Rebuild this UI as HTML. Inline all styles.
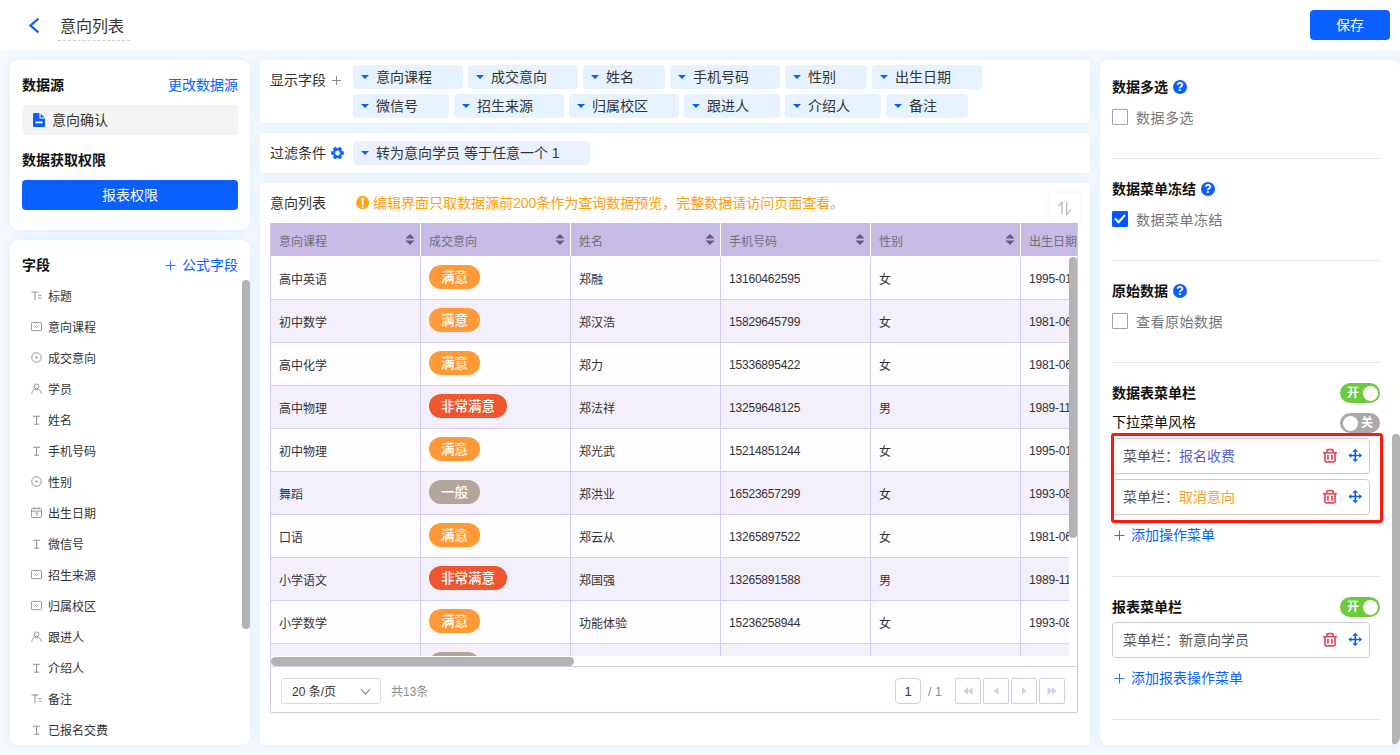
<!DOCTYPE html>
<html lang="zh-CN">
<head>
<meta charset="utf-8">
<title>意向列表</title>
<style>
*{box-sizing:border-box;margin:0;padding:0}
html,body{width:1400px;height:755px;overflow:hidden}
body{background:#f6faff;font-family:"Liberation Sans","Noto Sans CJK SC",sans-serif;font-size:14px;color:#333;position:relative}
.abs{position:absolute}
.hdr{position:absolute;left:0;top:0;width:1400px;height:50px;background:#fff}
.panel{position:absolute;background:#fff;border-radius:8px;box-shadow:0 0 10px rgba(70,160,250,.17)}
.b{font-weight:bold;color:#111}
.blue{color:#0a62ff}
.btn{background:#0960ff;color:#fff;border-radius:4px;text-align:center}
.t{position:absolute;white-space:nowrap;line-height:20px}
/* field list */
.fl{position:absolute;left:20px;height:20px;line-height:20px;font-size:12px;color:#333;white-space:nowrap}
.fl svg{position:absolute;left:1px;top:4px;width:11px;height:11px}
.fl span{position:absolute;left:18px;top:1px}
/* chips */
.chip{position:absolute;height:24px;border-radius:4px;background:#e6f3ff;font-size:14px;line-height:24px;color:#333;white-space:nowrap}
.chip i{position:absolute;left:8px;top:10px;width:0;height:0;border-left:4px solid transparent;border-right:4px solid transparent;border-top:4.5px solid #0960ff}
.chip span{position:absolute;left:23px;top:0}
/* table */
.th{position:absolute;top:0;height:33px;background:#c7bbe6;color:#6f6f7a;font-size:12px;line-height:39px;padding-left:8px;white-space:nowrap;overflow:hidden}
.row{position:absolute;left:0;width:799px;height:43px;border-bottom:1px solid #d6ccef}
.row.e{background:#f3f0fb}
.row.o{background:#fdfcff}
.td.n{line-height:44px;letter-spacing:-.2px}
.td{position:absolute;top:0;height:42px;line-height:46px;font-size:12px;color:#333;padding-left:8px;border-left:1px solid #d6ccef;white-space:nowrap;overflow:hidden}
.tag{position:absolute;left:8px;top:8px;height:24px;line-height:25px;border-radius:12px;color:#fff;font-size:13.5px;font-weight:500;padding:0 12px}
.tag.a{background:#ff9a36}.tag.r{background:#ef552e}.tag.g{background:#b3a599}
.sort{position:absolute;right:5px;top:11px;width:10px;height:11px}
/* right panel */
.sep{position:absolute;left:12px;width:268px;height:1px;background:#e6e6e6}
.cb{position:absolute;left:12px;width:16px;height:16px;border:1px solid #9d9dbd;border-radius:1px;background:#fff}
.cbl{position:absolute;left:36px;font-size:14px;color:#777;line-height:20px;white-space:nowrap;letter-spacing:.5px}
.q{position:absolute;width:14px;height:14px;border-radius:50%;background:#0960ff;color:#fff;font-size:12px;font-weight:bold;line-height:14.5px;text-align:center}
.sw{position:absolute;left:240px;width:40px;height:20px;border-radius:10px;color:#fff;font-size:12px;font-weight:bold;line-height:20px}
.sw b{position:absolute;top:2.5px;width:15px;height:15px;border-radius:50%;background:#fff}
.mi{position:absolute;left:12px;width:258px;height:36px;border:1px solid #ccc;border-radius:4px;background:#fff;font-size:14px;line-height:34px;color:#555;padding-left:10px;white-space:nowrap}
</style>
</head>
<body>
<!-- HEADER -->
<div class="hdr">
  <svg class="abs" style="left:28px;top:17px" width="13" height="17" viewBox="0 0 13 17"><path d="M10.5 1.5 L2.5 8.5 L10.5 15.5" fill="none" stroke="#0960ff" stroke-width="2.3" stroke-linecap="butt" stroke-linejoin="miter"/></svg>
  <div class="t" style="left:60px;top:16px;font-size:16px;color:#333;line-height:22px">意向列表</div>
  <div class="abs" style="left:58px;top:40px;width:72px;height:0;border-top:1px dashed #d0d0d0"></div>
  <div class="btn abs" style="left:1310px;top:10px;width:80px;height:30px;line-height:30px;font-size:14px">保存</div>
</div>
<!-- LEFT-1 -->
<div class="panel" id="L1" style="left:10px;top:60px;width:240px;height:170px">
  <div class="t b" style="left:12px;top:15px">数据源</div>
  <div class="t blue" style="right:12px;top:15px">更改数据源</div>
  <div class="abs" style="left:12px;top:45px;width:216px;height:30px;background:#f4f4f4;border-radius:3px"></div>
  <svg class="abs" style="left:23px;top:53px" width="12" height="14" viewBox="0 0 12 14"><path d="M0 1.2 Q0 0 1.2 0 H7 L12 5 V12.8 Q12 14 10.8 14 H1.2 Q0 14 0 12.8 Z" fill="#0960ff"/><path d="M7 0 V5 H12" fill="none" stroke="#fff" stroke-width="1.2"/><rect x="2.5" y="8.5" width="7" height="1.8" fill="#fff"/></svg>
  <div class="t" style="left:42px;top:50px;color:#333">意向确认</div>
  <div class="t b" style="left:12px;top:90px">数据获取权限</div>
  <div class="btn abs" style="left:12px;top:120px;width:216px;height:30px;line-height:30px;font-size:14px">报表权限</div>
</div>
<!-- LEFT-2 -->
<div class="panel" id="L2" style="left:10px;top:240px;width:240px;height:505px;overflow:hidden">
  <div class="t b" style="left:12px;top:15px">字段</div>
  <div class="t blue" style="right:12px;top:15px"><svg style="position:absolute;left:0;top:5px" width="11" height="11" viewBox="0 0 11 11"><path d="M5.5 0.5V10.5M0.5 5.5H10.5" stroke="#2d72ff" stroke-width="1" fill="none"/></svg><span style="padding-left:17px">公式字段</span></div>
  <div class="abs" style="left:232px;top:40px;width:8px;height:349px;border-radius:4px;background:#b3b3b3"></div>
  <div class="fl" style="top:46px"><svg viewBox="0 0 11 11"><path d="M0.5 2H7.3M4 2V10.2M7.6 5.5H10.2M7.6 8H10.2" fill="none" stroke="#8c8c8c" stroke-width="1"/></svg><span>标题</span></div>
<div class="fl" style="top:77px"><svg viewBox="0 0 12 12"><rect x="0.5" y="1.5" width="11" height="9" rx="1" fill="none" stroke="#8c8c8c" stroke-width="1"/><path d="M3.8 5L6 7.2L8.2 5" fill="none" stroke="#8c8c8c" stroke-width="1"/></svg><span>意向课程</span></div>
<div class="fl" style="top:108px"><svg viewBox="0 0 12 12"><circle cx="6" cy="6" r="5.2" fill="none" stroke="#8c8c8c" stroke-width="1"/><circle cx="6" cy="6" r="1.2" fill="#8c8c8c"/></svg><span>成交意向</span></div>
<div class="fl" style="top:139px"><svg viewBox="0 0 12 12"><circle cx="6" cy="3.7" r="2.7" fill="none" stroke="#8c8c8c" stroke-width="1"/><path d="M0.8 11.5C1.2 8.3 3.4 6.6 6 6.6S10.8 8.3 11.2 11.5" fill="none" stroke="#8c8c8c" stroke-width="1"/></svg><span>学员</span></div>
<div class="fl" style="top:170px"><svg viewBox="0 0 11 11"><path d="M2 2.3H9.2" fill="none" stroke="#a8a8a8" stroke-width="1.3"/><path d="M5.6 2.3V10.2M3.1 10.2H8.1" fill="none" stroke="#8c8c8c" stroke-width="1"/></svg><span>姓名</span></div>
<div class="fl" style="top:201px"><svg viewBox="0 0 11 11"><path d="M2 2.3H9.2" fill="none" stroke="#a8a8a8" stroke-width="1.3"/><path d="M5.6 2.3V10.2M3.1 10.2H8.1" fill="none" stroke="#8c8c8c" stroke-width="1"/></svg><span>手机号码</span></div>
<div class="fl" style="top:232px"><svg viewBox="0 0 12 12"><circle cx="6" cy="6" r="5.2" fill="none" stroke="#8c8c8c" stroke-width="1"/><circle cx="6" cy="6" r="1.2" fill="#8c8c8c"/></svg><span>性别</span></div>
<div class="fl" style="top:263px"><svg viewBox="0 0 12 12"><rect x="0.5" y="1.5" width="11" height="10" rx="1.5" fill="none" stroke="#8c8c8c" stroke-width="1"/><path d="M0.5 4.5H11.5M3.5 0.5V2.5M8.5 0.5V2.5" fill="none" stroke="#8c8c8c" stroke-width="1"/><path d="M4.5 6.5H7.5L6 10" fill="none" stroke="#8c8c8c" stroke-width="0.9"/></svg><span>出生日期</span></div>
<div class="fl" style="top:294px"><svg viewBox="0 0 11 11"><path d="M2 2.3H9.2" fill="none" stroke="#a8a8a8" stroke-width="1.3"/><path d="M5.6 2.3V10.2M3.1 10.2H8.1" fill="none" stroke="#8c8c8c" stroke-width="1"/></svg><span>微信号</span></div>
<div class="fl" style="top:325px"><svg viewBox="0 0 12 12"><rect x="0.5" y="1.5" width="11" height="9" rx="1" fill="none" stroke="#8c8c8c" stroke-width="1"/><path d="M3.8 5L6 7.2L8.2 5" fill="none" stroke="#8c8c8c" stroke-width="1"/></svg><span>招生来源</span></div>
<div class="fl" style="top:356px"><svg viewBox="0 0 12 12"><rect x="0.5" y="1.5" width="11" height="9" rx="1" fill="none" stroke="#8c8c8c" stroke-width="1"/><path d="M3.8 5L6 7.2L8.2 5" fill="none" stroke="#8c8c8c" stroke-width="1"/></svg><span>归属校区</span></div>
<div class="fl" style="top:387px"><svg viewBox="0 0 12 12"><circle cx="6" cy="3.7" r="2.7" fill="none" stroke="#8c8c8c" stroke-width="1"/><path d="M0.8 11.5C1.2 8.3 3.4 6.6 6 6.6S10.8 8.3 11.2 11.5" fill="none" stroke="#8c8c8c" stroke-width="1"/></svg><span>跟进人</span></div>
<div class="fl" style="top:418px"><svg viewBox="0 0 11 11"><path d="M2 2.3H9.2" fill="none" stroke="#a8a8a8" stroke-width="1.3"/><path d="M5.6 2.3V10.2M3.1 10.2H8.1" fill="none" stroke="#8c8c8c" stroke-width="1"/></svg><span>介绍人</span></div>
<div class="fl" style="top:449px"><svg viewBox="0 0 11 11"><path d="M0.5 2H7.3M4 2V10.2M7.6 5.5H10.2M7.6 8H10.2" fill="none" stroke="#8c8c8c" stroke-width="1"/></svg><span>备注</span></div>
<div class="fl" style="top:480px"><svg viewBox="0 0 11 11"><path d="M2 2.3H9.2" fill="none" stroke="#a8a8a8" stroke-width="1.3"/><path d="M5.6 2.3V10.2M3.1 10.2H8.1" fill="none" stroke="#8c8c8c" stroke-width="1"/></svg><span>已报名交费</span></div>

</div>
<!-- CENTER-A -->
<div class="panel" id="CA" style="left:260px;top:60px;width:830px;height:63px;border-radius:4px">
  <div class="t" style="left:10px;top:10px">显示字段</div>
  <svg class="abs" style="left:72px;top:16px" width="9" height="9" viewBox="0 0 9 9"><path d="M4.5 0V9M0 4.5H9" stroke="#8a8a8a" stroke-width="1" fill="none"/></svg>
  <div class="chip" style="left:93px;top:5px;width:110px"><i></i><span>意向课程</span></div>
<div class="chip" style="left:208px;top:5px;width:110px"><i></i><span>成交意向</span></div>
<div class="chip" style="left:323px;top:5px;width:82px"><i></i><span>姓名</span></div>
<div class="chip" style="left:410px;top:5px;width:110px"><i></i><span>手机号码</span></div>
<div class="chip" style="left:525px;top:5px;width:82px"><i></i><span>性别</span></div>
<div class="chip" style="left:612px;top:5px;width:110px"><i></i><span>出生日期</span></div>
<div class="chip" style="left:93px;top:34px;width:96px"><i></i><span>微信号</span></div>
<div class="chip" style="left:194px;top:34px;width:110px"><i></i><span>招生来源</span></div>
<div class="chip" style="left:309px;top:34px;width:110px"><i></i><span>归属校区</span></div>
<div class="chip" style="left:424px;top:34px;width:96px"><i></i><span>跟进人</span></div>
<div class="chip" style="left:525px;top:34px;width:96px"><i></i><span>介绍人</span></div>
<div class="chip" style="left:626px;top:34px;width:82px"><i></i><span>备注</span></div>

</div>
<!-- CENTER-B -->
<div class="panel" id="CB" style="left:260px;top:133px;width:830px;height:40px;border-radius:4px">
  <div class="t" style="left:10px;top:10px">过滤条件</div>
  <svg class="abs" style="left:71px;top:14px" width="13" height="12" viewBox="0 0 13 12"><path d="M10.67 4.31 L12.61 4.48 L12.61 7.52 L10.67 7.69 L10.05 8.77 L10.88 10.53 L8.24 12.06 L7.13 10.46 L5.87 10.46 L4.76 12.06 L2.12 10.53 L2.95 8.77 L2.33 7.69 L0.39 7.52 L0.39 4.48 L2.33 4.31 L2.95 3.23 L2.12 1.47 L4.76 -0.06 L5.87 1.54 L7.13 1.54 L8.24 -0.06 L10.88 1.47 L10.05 3.23Z M9.20 6.00 A2.7 2.7 0 1 0 3.80 6.00 A2.7 2.7 0 1 0 9.20 6.00Z" fill="#0960ff" fill-rule="evenodd" stroke="#0960ff" stroke-width="0.5" stroke-linejoin="round"/></svg>
  <div class="chip" style="left:93px;top:8px;width:237px;background:#e9f0fe"><i></i><span>转为意向学员 等于任意一个 1</span></div>
</div>
<!-- CENTER-C -->
<div class="panel" id="CC" style="left:260px;top:183px;width:830px;height:562px;border-radius:4px">
  <div class="t" style="left:10px;top:10px">意向列表</div>
  <svg class="abs" style="left:96px;top:13px" width="14" height="14" viewBox="0 0 14 14"><circle cx="6.65" cy="6.55" r="6.6" fill="#ffa40e"/><path d="M5.45 1.9H7.85L7.35 9H5.95Z M5.65 9.9H7.65V11.5H5.65Z" fill="#fff"/></svg>
  <div class="t" style="left:113px;top:10px;color:#ff9d0d">编辑界面只取数据源前200条作为查询数据预览，完整数据请访问页面查看。</div>
  <div class="abs" style="left:790px;top:10px;width:30px;height:30px;background:#fff;box-shadow:0 0 5px rgba(120,100,140,.13)"></div>
  <svg class="abs" style="left:797px;top:18px" width="16" height="15" viewBox="0 0 16 15"><path d="M1.3 5 L5 1.3 V13.5 M9.7 1.3 V13.5 L13.8 8.5" fill="none" stroke="#b0b0b0" stroke-width="1.1"/></svg>
  <div id="tbl" class="abs" style="left:10px;top:40px;width:808px;height:490px;border:1px solid #d2c7ec;border-top:none;border-radius:0 0 2px 2px;background:#fff;overflow:hidden"><div class="abs" style="left:0;top:0;width:806px;height:34px;background:#fff;overflow:hidden"><div class="th" style="left:0px;width:149px">意向课程<svg class="sort" viewBox="0 0 10 12"><path d="M5 0L10 5H0Z M5 12L10 7H0Z" fill="#5a6274"/></svg></div><div class="th" style="left:150px;width:149px">成交意向<svg class="sort" viewBox="0 0 10 12"><path d="M5 0L10 5H0Z M5 12L10 7H0Z" fill="#5a6274"/></svg></div><div class="th" style="left:300px;width:149px">姓名<svg class="sort" viewBox="0 0 10 12"><path d="M5 0L10 5H0Z M5 12L10 7H0Z" fill="#5a6274"/></svg></div><div class="th" style="left:450px;width:149px">手机号码<svg class="sort" viewBox="0 0 10 12"><path d="M5 0L10 5H0Z M5 12L10 7H0Z" fill="#5a6274"/></svg></div><div class="th" style="left:600px;width:149px">性别<svg class="sort" viewBox="0 0 10 12"><path d="M5 0L10 5H0Z M5 12L10 7H0Z" fill="#5a6274"/></svg></div><div class="th" style="left:750px;width:149px">出生日期<svg class="sort" viewBox="0 0 10 12"><path d="M5 0L10 5H0Z M5 12L10 7H0Z" fill="#5a6274"/></svg></div></div>
<div class="abs" style="left:0;top:34px;width:798px;height:399px;overflow:hidden"><div class="row o" style="top:0px"><div class="td" style="left:0px;width:149px;border-left:none">高中英语</div><div class="td" style="left:149px;width:150px"><span class="tag a">满意</span></div><div class="td" style="left:299px;width:150px">郑融</div><div class="td n" style="left:449px;width:150px">13160462595</div><div class="td" style="left:599px;width:150px">女</div><div class="td n" style="left:749px;width:150px">1995-01-01</div></div>
<div class="row e" style="top:43px"><div class="td" style="left:0px;width:149px;border-left:none">初中数学</div><div class="td" style="left:149px;width:150px"><span class="tag a">满意</span></div><div class="td" style="left:299px;width:150px">郑汉浩</div><div class="td n" style="left:449px;width:150px">15829645799</div><div class="td" style="left:599px;width:150px">女</div><div class="td n" style="left:749px;width:150px">1981-06-01</div></div>
<div class="row o" style="top:86px"><div class="td" style="left:0px;width:149px;border-left:none">高中化学</div><div class="td" style="left:149px;width:150px"><span class="tag a">满意</span></div><div class="td" style="left:299px;width:150px">郑力</div><div class="td n" style="left:449px;width:150px">15336895422</div><div class="td" style="left:599px;width:150px">女</div><div class="td n" style="left:749px;width:150px">1981-06-01</div></div>
<div class="row e" style="top:129px"><div class="td" style="left:0px;width:149px;border-left:none">高中物理</div><div class="td" style="left:149px;width:150px"><span class="tag r">非常满意</span></div><div class="td" style="left:299px;width:150px">郑法祥</div><div class="td n" style="left:449px;width:150px">13259648125</div><div class="td" style="left:599px;width:150px">男</div><div class="td n" style="left:749px;width:150px">1989-11-01</div></div>
<div class="row o" style="top:172px"><div class="td" style="left:0px;width:149px;border-left:none">初中物理</div><div class="td" style="left:149px;width:150px"><span class="tag a">满意</span></div><div class="td" style="left:299px;width:150px">郑光武</div><div class="td n" style="left:449px;width:150px">15214851244</div><div class="td" style="left:599px;width:150px">女</div><div class="td n" style="left:749px;width:150px">1995-01-01</div></div>
<div class="row e" style="top:215px"><div class="td" style="left:0px;width:149px;border-left:none">舞蹈</div><div class="td" style="left:149px;width:150px"><span class="tag g">一般</span></div><div class="td" style="left:299px;width:150px">郑洪业</div><div class="td n" style="left:449px;width:150px">16523657299</div><div class="td" style="left:599px;width:150px">女</div><div class="td n" style="left:749px;width:150px">1993-08-01</div></div>
<div class="row o" style="top:258px"><div class="td" style="left:0px;width:149px;border-left:none">口语</div><div class="td" style="left:149px;width:150px"><span class="tag a">满意</span></div><div class="td" style="left:299px;width:150px">郑云从</div><div class="td n" style="left:449px;width:150px">13265897522</div><div class="td" style="left:599px;width:150px">女</div><div class="td n" style="left:749px;width:150px">1981-06-01</div></div>
<div class="row e" style="top:301px"><div class="td" style="left:0px;width:149px;border-left:none">小学语文</div><div class="td" style="left:149px;width:150px"><span class="tag r">非常满意</span></div><div class="td" style="left:299px;width:150px">郑国强</div><div class="td n" style="left:449px;width:150px">13265891588</div><div class="td" style="left:599px;width:150px">男</div><div class="td n" style="left:749px;width:150px">1989-11-01</div></div>
<div class="row o" style="top:344px"><div class="td" style="left:0px;width:149px;border-left:none">小学数学</div><div class="td" style="left:149px;width:150px"><span class="tag a">满意</span></div><div class="td" style="left:299px;width:150px">功能体验</div><div class="td n" style="left:449px;width:150px">15236258944</div><div class="td" style="left:599px;width:150px">女</div><div class="td n" style="left:749px;width:150px">1993-08-01</div></div>
<div class="row e" style="top:387px"><div class="td" style="left:0px;width:149px;border-left:none">小学英语</div><div class="td" style="left:149px;width:150px"><span class="tag g">一般</span></div><div class="td" style="left:299px;width:150px">郑一</div><div class="td n" style="left:449px;width:150px">15236258945</div><div class="td" style="left:599px;width:150px">女</div><div class="td n" style="left:749px;width:150px">1993-08-01</div></div>
</div>
<div class="abs" style="left:798px;top:34px;width:8px;height:281px;border-radius:4px;background:#b3b3b3"></div>
<div class="abs" style="left:0;top:433px;width:807px;height:10px;background:#fff"></div><div class="abs" style="left:0;top:434px;width:303px;height:9px;border-radius:5px;background:#b3b3b3"></div>
<div class="abs" style="left:0;top:443px;width:807px;height:1px;background:#d6ccef"></div>
<div class="abs" style="left:10px;top:455px;width:100px;height:26px;border:1px solid #dcdcdc;border-radius:3px;background:#fff"></div><div class="t" style="left:21px;top:459px;font-size:12px;color:#333">20 条/页</div><svg class="abs" style="left:89px;top:465px" width="11" height="8" viewBox="0 0 11 8"><path d="M1 1.2L5.5 6L10 1.2" fill="none" stroke="#8c8c8c" stroke-width="1.2"/></svg><div class="t" style="left:120px;top:459px;font-size:12px;color:#8c8c8c">共13条</div>
<div class="abs" style="left:624px;top:455px;width:26px;height:26px;border:1px solid #d6ccef;border-radius:4px;background:#fff;text-align:center;line-height:25px;font-size:13px;color:#333">1</div><div class="t" style="left:657px;top:459px;font-size:12.5px;color:#8c8c8c">/ 1</div>
<div class="abs" style="left:684px;top:455px;width:26px;height:26px;border:1px solid #d6ccef;border-radius:2px;background:#fff"><svg class="abs" style="left:6px;top:6px" width="12" height="12" viewBox="0 0 12 12"><path d="M6 2L1.5 6L6 10Z M10.5 2L6 6L10.5 10Z" fill="#d3c8ee"/></svg></div><div class="abs" style="left:712px;top:455px;width:26px;height:26px;border:1px solid #d6ccef;border-radius:2px;background:#fff"><svg class="abs" style="left:6px;top:6px" width="12" height="12" viewBox="0 0 12 12"><path d="M8.5 2L4 6L8.5 10Z" fill="#d3c8ee"/></svg></div><div class="abs" style="left:740px;top:455px;width:26px;height:26px;border:1px solid #d6ccef;border-radius:2px;background:#fff"><svg class="abs" style="left:6px;top:6px" width="12" height="12" viewBox="0 0 12 12"><path d="M4 2L8.5 6L4 10Z" fill="#d3c8ee"/></svg></div><div class="abs" style="left:768px;top:455px;width:26px;height:26px;border:1px solid #d6ccef;border-radius:2px;background:#fff"><svg class="abs" style="left:6px;top:6px" width="12" height="12" viewBox="0 0 12 12"><path d="M1.5 2L6 6L1.5 10Z M6 2L10.5 6L6 10Z" fill="#d3c8ee"/></svg></div>
</div>
</div>
<!-- RIGHT -->
<div class="panel" id="R" style="left:1100px;top:60px;width:300px;height:685px;overflow:hidden;border-radius:8px">
<div class="t b" style="left:12px;top:17px">数据多选</div><div class="q" style="left:73px;top:20px">?</div>
<div class="cb" style="top:49px"></div><div class="cbl" style="top:48px">数据多选</div>
<div class="sep" style="top:98px"></div>
<div class="t b" style="left:12px;top:119px">数据菜单冻结</div><div class="q" style="left:101px;top:122px">?</div>
<div class="cb" style="top:151px;background:#0558ff;border-color:#0558ff"><svg class="abs" style="left:0px;top:1px" width="14" height="12" viewBox="0 0 14 12"><path d="M2 5.5L5.6 9.2L12 2" fill="none" stroke="#fff" stroke-width="2"/></svg></div><div class="cbl" style="top:150px">数据菜单冻结</div>
<div class="sep" style="top:200px"></div>
<div class="t b" style="left:12px;top:221px">原始数据</div><div class="q" style="left:73px;top:224px">?</div>
<div class="cb" style="top:253px"></div><div class="cbl" style="top:252px">查看原始数据</div>
<div class="sep" style="top:302px"></div>
<div class="t b" style="left:12px;top:323px">数据表菜单栏</div>
<div class="sw" style="top:323px;background:#6ccb3c"><span style="position:absolute;left:7px">开</span><b style="left:22.5px"></b></div>
<div class="t" style="left:12px;top:352px;color:#111">下拉菜单风格</div>
<div class="sw" style="top:353px;background:#aaa"><b style="left:2.5px"></b><span style="position:absolute;left:21px">关</span></div>
<div class="mi" style="top:378px">菜单栏：<span style="color:#5b5fd6">报名收费</span><svg class="abs" style="left:210px;top:9px" width="14" height="15" viewBox="0 0 14 15"><g fill="none" stroke="#e8485c" stroke-width="1.7"><path d="M0 4.75H14"/><path d="M4 4.6V2.4Q4 1.65 4.8 1.65H9.3Q10.1 1.65 10.1 2.4V4.6"/><path d="M1.95 5V12.6Q1.95 13.9 3.2 13.9H10.8Q12.05 13.9 12.05 12.6V5"/><path d="M4.95 7.1V11.7M8.95 7.1V11.7"/></g></svg><svg class="abs" style="left:235px;top:9px" width="15" height="15" viewBox="0 0 15 15"><path d="M7.25 2.5V12.5M2 7.5H12.5" stroke="#0960ff" stroke-width="1.7" fill="none"/><path d="M7.25 0.7L10.2 3.8H4.3Z M7.25 14.3L10.2 11.2H4.3Z M0.4 7.5L3.3 4.9V10.1Z M14.1 7.5L11.2 4.9V10.1Z" fill="#0960ff"/></svg></div>
<div class="mi" style="top:419px">菜单栏：<span style="color:#f5a020">取消意向</span><svg class="abs" style="left:210px;top:9px" width="14" height="15" viewBox="0 0 14 15"><g fill="none" stroke="#e8485c" stroke-width="1.7"><path d="M0 4.75H14"/><path d="M4 4.6V2.4Q4 1.65 4.8 1.65H9.3Q10.1 1.65 10.1 2.4V4.6"/><path d="M1.95 5V12.6Q1.95 13.9 3.2 13.9H10.8Q12.05 13.9 12.05 12.6V5"/><path d="M4.95 7.1V11.7M8.95 7.1V11.7"/></g></svg><svg class="abs" style="left:235px;top:9px" width="15" height="15" viewBox="0 0 15 15"><path d="M7.25 2.5V12.5M2 7.5H12.5" stroke="#0960ff" stroke-width="1.7" fill="none"/><path d="M7.25 0.7L10.2 3.8H4.3Z M7.25 14.3L10.2 11.2H4.3Z M0.4 7.5L3.3 4.9V10.1Z M14.1 7.5L11.2 4.9V10.1Z" fill="#0960ff"/></svg></div>
<div class="abs" style="left:11px;top:373px;width:272px;height:90px;border:3px solid #ff190c;border-radius:3px"></div>
<div class="t blue" style="left:13px;top:465px;padding-left:18px"><svg style="position:absolute;left:1px;top:5px" width="11" height="11" viewBox="0 0 11 11"><path d="M5.5 0.5V10.5M0.5 5.5H10.5" stroke="#2d72ff" stroke-width="1" fill="none"/></svg>添加操作菜单</div>
<div class="sep" style="top:516px"></div>
<div class="t b" style="left:12px;top:537px">报表菜单栏</div>
<div class="sw" style="top:537px;background:#6ccb3c"><span style="position:absolute;left:7px">开</span><b style="left:22.5px"></b></div>
<div class="mi" style="top:562px">菜单栏：<span style="color:#555">新意向学员</span><svg class="abs" style="left:210px;top:9px" width="14" height="15" viewBox="0 0 14 15"><g fill="none" stroke="#e8485c" stroke-width="1.7"><path d="M0 4.75H14"/><path d="M4 4.6V2.4Q4 1.65 4.8 1.65H9.3Q10.1 1.65 10.1 2.4V4.6"/><path d="M1.95 5V12.6Q1.95 13.9 3.2 13.9H10.8Q12.05 13.9 12.05 12.6V5"/><path d="M4.95 7.1V11.7M8.95 7.1V11.7"/></g></svg><svg class="abs" style="left:235px;top:9px" width="15" height="15" viewBox="0 0 15 15"><path d="M7.25 2.5V12.5M2 7.5H12.5" stroke="#0960ff" stroke-width="1.7" fill="none"/><path d="M7.25 0.7L10.2 3.8H4.3Z M7.25 14.3L10.2 11.2H4.3Z M0.4 7.5L3.3 4.9V10.1Z M14.1 7.5L11.2 4.9V10.1Z" fill="#0960ff"/></svg></div>
<div class="t blue" style="left:13px;top:608px;padding-left:18px"><svg style="position:absolute;left:1px;top:5px" width="11" height="11" viewBox="0 0 11 11"><path d="M5.5 0.5V10.5M0.5 5.5H10.5" stroke="#2d72ff" stroke-width="1" fill="none"/></svg>添加报表操作菜单</div>
<div class="sep" style="top:659px"></div>
<div class="abs" style="left:292px;top:374px;width:8px;height:311px;border-radius:4px;background:#b3b3b3"></div>

</div>
</body>
</html>
